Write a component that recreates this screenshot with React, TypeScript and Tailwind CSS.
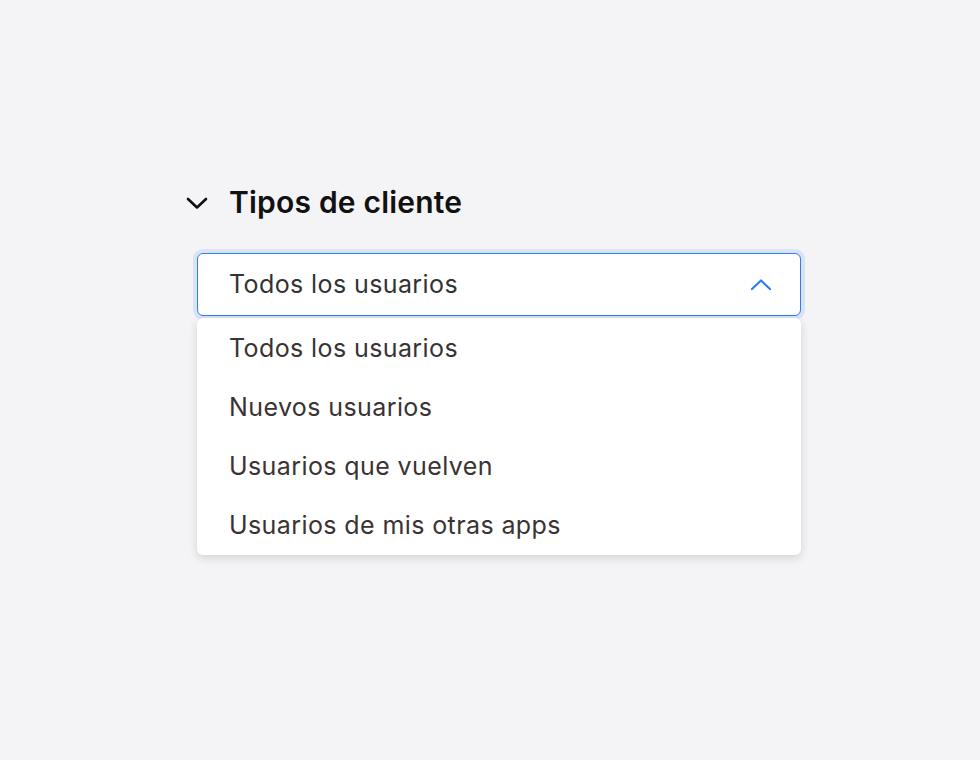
import React from "react";

const items = ["Todos los usuarios", "Nuevos usuarios", "Usuarios que vuelven", "Usuarios de mis otras apps"];

export default function App() {
  return (
    <div
      className="w-[980px] h-[760px] bg-[#f4f4f7] overflow-hidden"
      style={{ fontFamily: "Inter, 'Noto Sans', sans-serif" }}
    >
      <div className="pt-[183px] pl-[186px] w-[801px]">
        <div className="flex items-center h-[38px]">
          <svg width="22" height="14" viewBox="0 0 22 14" className="mt-[2px]">
            <path d="M2 3 L11 11.5 L20 3" fill="none" stroke="#111" strokeWidth="2.6" strokeLinecap="round" strokeLinejoin="round" />
          </svg>
          <span className="ml-[21px] text-[30px] font-semibold tracking-[0.2px] text-[#111]">Tipos de cliente</span>
        </div>
        <div className="ml-[11px] mt-[32px] relative">
          <div className="h-[63px] rounded-[6px] border-[1.5px] border-[#2f7cf6] bg-white shadow-[0_0_0_4px_rgba(47,124,246,0.14)] flex items-center justify-between pl-[31px] pr-[28px]">
            <span className="text-[25px] text-[#333] tracking-[0.4px]">Todos los usuarios</span>
            <svg width="22" height="13" viewBox="0 0 22 13">
              <path d="M2 11 L11 2.5 L20 11" fill="none" stroke="#2f7cf6" strokeWidth="2.2" strokeLinecap="round" strokeLinejoin="round" />
            </svg>
          </div>
          <div className="mt-[2px] pt-[1px] rounded-[6px] bg-white shadow-[0_3px_10px_rgba(0,0,0,0.14)]">
            {items.map((t) => (
              <div key={t} className="h-[59px] flex items-center pl-[32px] text-[25px] text-[#3a3333] tracking-[0.4px]">
                {t}
              </div>
            ))}
          </div>
        </div>
      </div>
    </div>
  );
}
